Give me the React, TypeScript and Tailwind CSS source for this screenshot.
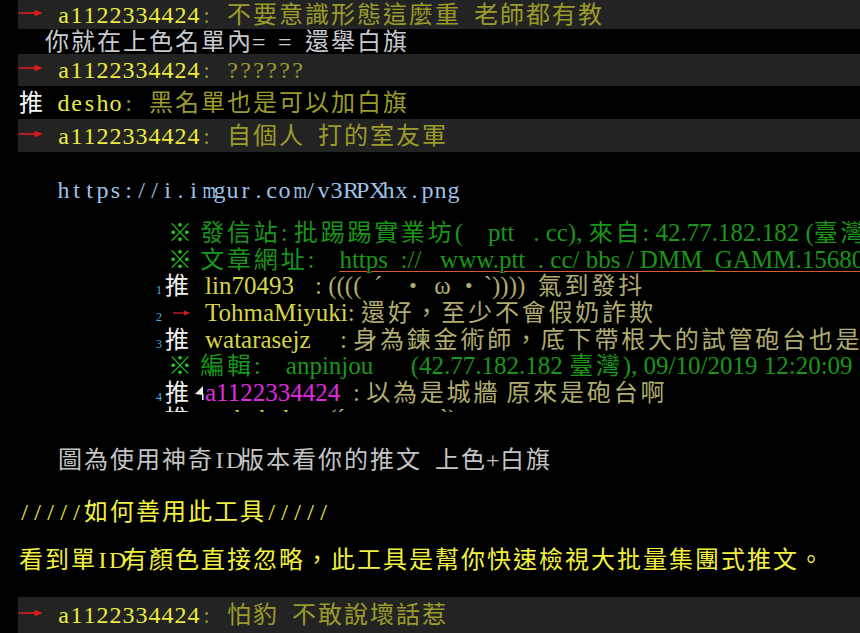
import React from "react";

const isWide = (ch: string) => {
  const c = ch.codePointAt(0) ?? 0;
  return (c >= 0x2e80 && c <= 0x9fff) || (c >= 0xf900 && c <= 0xfaff) || (c >= 0xff00 && c <= 0xff60);
};

const isBroad = (ch: string) => ch === "m" || ch === "w" || ch === "M" || ch === "W";

function T({ text, className = "" }: { text: string; className?: string }) {
  return (
    <span className={`shrink-0 ${className}`}>
      {Array.from(text).map((ch, i) => (
        <span
          key={i}
          className={isWide(ch) ? "inline-block w-[26px] text-center" : "inline-block w-[13px] text-center"}
        >
          {ch === " " ? "\u00a0" : isBroad(ch) ? <span className="inline-block scale-x-[0.72]">{ch}</span> : ch}
        </span>
      ))}
    </span>
  );
}

function P({ text, className = "" }: { text: string; className?: string }) {
  const runs = text.match(/[\u2e80-\u9fff\uf900-\ufaff\uff00-\uff60]+|[^\u2e80-\u9fff\uf900-\ufaff\uff00-\uff60]+/g) ?? [];
  return (
    <span className={`shrink-0 ${className}`}>
      {runs.map((r, i) =>
        isWide(r[0]) ? (
          <span key={i} className="text-[24px] tracking-[2.8px]">
            {r}
          </span>
        ) : (
          <span key={i}>{r}</span>
        )
      )}
    </span>
  );
}

function Arrow() {
  return (
    <span className="inline-flex w-[26px] shrink-0 -translate-y-[2px] items-center">
      <svg width="26" height="12" viewBox="0 0 26 12">
        <path d="M1 6H21" stroke="#dc1c1c" strokeWidth="1.6" />
        <path d="M16.5 2.8L25 6L16.5 9.2Z" fill="#dc1c1c" />
      </svg>
    </span>
  );
}

const Y = "text-[#ecec3e]";
const OL = "text-[#9b9b2a]";

function PushRow({ h, comment }: { h: string; comment: string }) {
  return (
    <div className={`flex pl-[18px] ${h}`}>
      <div className="flex flex-1 items-center whitespace-nowrap bg-[#232323]">
        <Arrow />
        <T text=" " />
        <T text="a1122334424" className={Y} />
        <T text={comment} className={OL} />
      </div>
    </div>
  );
}

const IY = "text-[#d6d644]";
const IK = "text-[#b0ac70]";
const IG = "text-[#1a961a]";
const IGB = "text-[#28c428]";
const IC = "text-[#46b4d8]";

function Num({ n }: { n: string }) {
  return <span className={`inline-block w-[15px] shrink-0 translate-y-[4px] pl-[6px] text-[12px] ${IC}`}>{n}</span>;
}

function Ref() {
  return <span className={`inline-block w-[26px] shrink-0 text-[24px] ${IGB}`}>※</span>;
}

function Push() {
  return <span className="inline-block w-[40px] shrink-0 text-[24px] text-[#f2f2f2]">推</span>;
}

export default function App() {
  return (
    <div className="h-[633px] w-full overflow-hidden bg-black font-['Liberation_Serif','Noto_Sans_CJK_TC',serif] text-[24px] leading-[26px]">
      <PushRow h="h-[29px]" comment=": 不要意識形態這麼重 老師都有教" />
      <div className="flex h-[25px] items-center whitespace-nowrap pl-[18px]">
        <T text="  你就在上色名單內= = 還舉白旗" className="text-[#c6cacf]" />
      </div>
      <PushRow h="h-[32px]" comment=": ??????" />
      <div className="flex h-[33px] items-center whitespace-nowrap pl-[18px]">
        <T text="推" className="text-[#f6f6f6]" />
        <T text=" " />
        <T text="desho" className={Y} />
        <T text=": 黑名單也是可以加白旗" className={OL} />
      </div>
      <PushRow h="h-[33px]" comment=": 自個人 打的室友軍" />

      <div className="mt-[25px] flex h-[26px] items-center whitespace-nowrap pl-[18px]">
        <T text="   https://i.imgur.com/v3RPXhx.png" className="text-[#9dc2ea]" />
      </div>

      <div className="flex h-[209px] flex-col overflow-hidden whitespace-pre pl-[150px] pt-[17px] text-[25px]">
        <div className="flex h-[26.6px] shrink-0 items-center pl-[18px]">
          <Ref />
          <P text=" 發信站: 批踢踢實業坊(    ptt   . cc), 來自: 42.77.182.182 (臺灣)" className={IG} />
        </div>
        <div className="flex h-[26.6px] shrink-0 items-center pl-[18px]">
          <Ref />
          <P text=" 文章網址:    " className={IG} />
          <span className={`shrink-0 ${IG} underline decoration-[#d85a2a] decoration-1 underline-offset-[3px]`}>
            https  ://   www.ptt  . cc/ bbs / DMM_GAMM.1568063209.A.0F1.html
          </span>
        </div>
        <div className="flex h-[26.6px] shrink-0 items-center">
          <Num n="1" />
          <Push />
          <span className={`inline-block w-[110px] shrink-0 ${IY}`}>lin70493</span>
          <P text=": ((((  ´   ・ ω ・`))))  氣到發抖" className={IK} />
        </div>
        <div className="flex h-[26.6px] shrink-0 items-center">
          <Num n="2" />
          <span className="inline-flex w-[40px] shrink-0 items-center pl-[8px]">
            <svg width="18" height="10" viewBox="0 0 18 10">
              <path d="M0 5H14" stroke="#c82020" strokeWidth="1.4" />
              <path d="M11 2.4L17.5 5L11 7.6Z" fill="#c82020" />
            </svg>
          </span>
          <span className={`shrink-0 ${IY}`}>TohmaMiyuki</span>
          <P text=": 還好，至少不會假奶詐欺" className={IK} />
        </div>
        <div className="flex h-[26.6px] shrink-0 items-center">
          <Num n="3" />
          <Push />
          <span className={`inline-block w-[135px] shrink-0 ${IY}`}>watarasejz</span>
          <P text=": 身為鍊金術師，底下帶根大的試管砲台也是很合理的" className={IK} />
        </div>
        <div className="flex h-[26.6px] shrink-0 items-center pl-[18px]">
          <Ref />
          <P text=" 編輯:    anpinjou      (42.77.182.182 臺灣), 09/10/2019 12:20:09" className={IG} />
        </div>
        <div className="flex h-[26.6px] shrink-0 items-center">
          <Num n="4" />
          <span className="inline-block w-[28px] shrink-0 text-[24px] text-[#f2f2f2]">推</span>
          <span className="inline-flex w-[12px] shrink-0 items-center">
            <svg width="12" height="20" viewBox="0 0 12 20">
              <polygon points="10,3 10,12 2,11" fill="#f0f0f0" />
              <rect x="9" y="11" width="1.5" height="6" fill="#f0f0f0" />
            </svg>
          </span>
          <span className="inline-block w-[148px] shrink-0 text-[#e02ae0]">a1122334424</span>
          <P text=": 以為是城牆 原來是砲台啊" className={IK} />
        </div>
        <div className="flex h-[26.6px] shrink-0 items-center">
          <Num n="5" />
          <Push />
          <span className={`inline-block w-[110px] shrink-0 ${IY}`}>tsukuhal</span>
          <P text=": (´ ・ ω ・ `)" className={IK} />
        </div>
      </div>

      <div className="mt-[35px] flex h-[26px] items-center whitespace-nowrap pl-[18px]">
        <T text="   圖為使用神奇ID版本看你的推文 上色+白旗" className="text-[#c4c4c4]" />
      </div>
      <div className="mt-[26px] flex h-[26px] items-center whitespace-nowrap pl-[18px]">
        <T text="/////如何善用此工具/////" className="text-[#f2f23e]" />
      </div>
      <div className="mt-[22px] flex h-[26px] items-center whitespace-nowrap pl-[18px]">
        <T text="看到單ID有顏色直接忽略，此工具是幫你快速檢視大批量集團式推文。" className="text-[#f2f23e]" />
      </div>
      <div className="mt-[24px]">
        <PushRow h="h-[36px]" comment=": 怕豹 不敢說壞話惹" />
      </div>
    </div>
  );
}
